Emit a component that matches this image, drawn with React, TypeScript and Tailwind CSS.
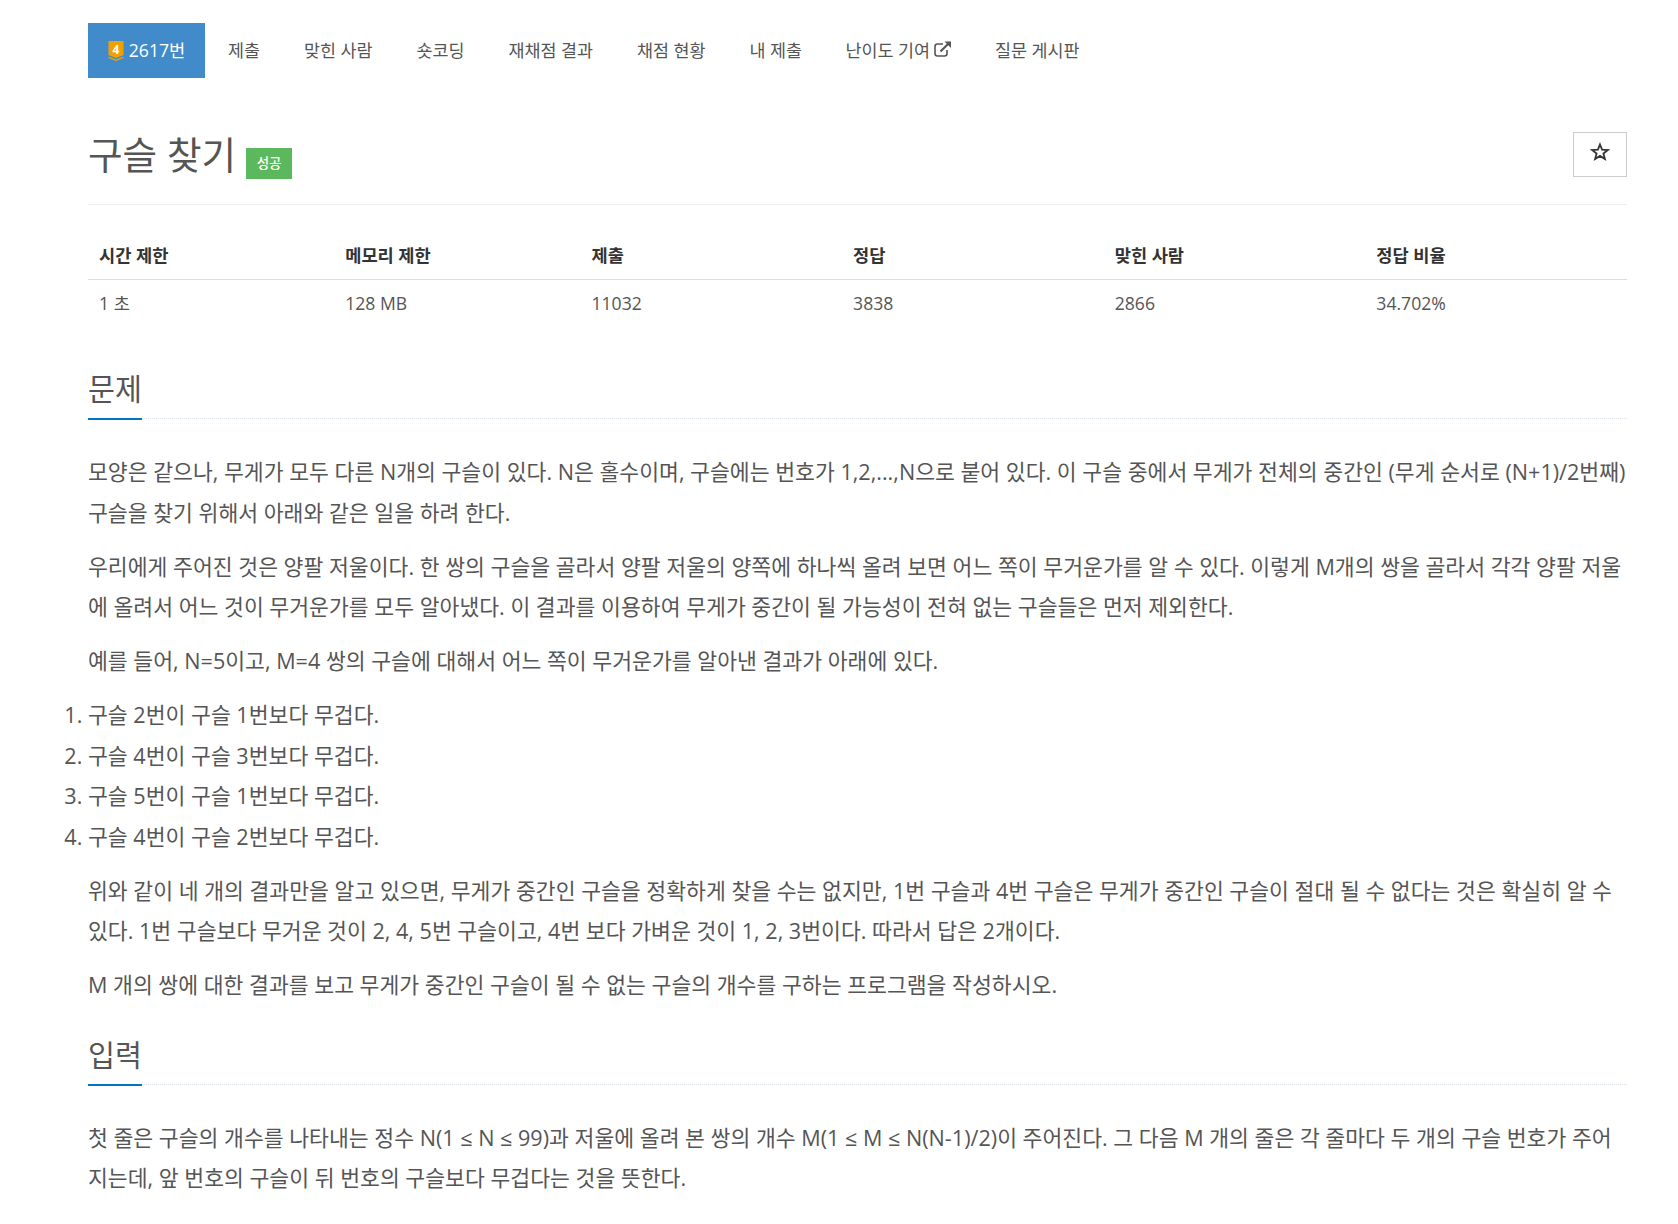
const navItems = ["제출", "맞힌 사람", "숏코딩", "재채점 결과", "채점 현황", "내 제출"];

const stats = [
  { label: "시간 제한", value: "1 초", width: "w-[16%]" },
  { label: "메모리 제한", value: "128 MB", width: "w-[16%]" },
  { label: "제출", value: "11032", width: "w-[17%]" },
  { label: "정답", value: "3838", width: "w-[17%]" },
  { label: "맞힌 사람", value: "2866", width: "w-[17%]" },
  { label: "정답 비율", value: "34.702%", width: "w-[17%]" },
];

const comparisons = [
  "구슬 2번이 구슬 1번보다 무겁다.",
  "구슬 4번이 구슬 3번보다 무겁다.",
  "구슬 5번이 구슬 1번보다 무겁다.",
  "구슬 4번이 구슬 2번보다 무겁다.",
];

const TierBadge = () => (
  <svg width="16" height="20" viewBox="0 0 15 20" className="mr-[5px]">
    <path d="M0 0H15V14L7.5 17L0 14Z" fill="#f0a000" />
    <path d="M0 15.5L7.5 18.5L15 15.5V17L7.5 20L0 17Z" fill="#f0a000" />
    <text x="7.5" y="12.5" textAnchor="middle" fontSize="12" fontWeight="700" fill="#fff">4</text>
  </svg>
);

const ExternalLink = () => (
  <svg width="18" height="16" viewBox="0 0 18 16" fill="none" className="ml-[4px] -translate-y-[1px]">
    <path d="M9 3H3.5C2.1 3 1 4.1 1 5.5V12.5C1 13.9 2.1 15 3.5 15H10.5C11.9 15 13 13.9 13 12.5V9" stroke="#555" strokeWidth="1.6" />
    <path d="M6.5 10.5L14.5 2.5" stroke="#555" strokeWidth="2.2" />
    <path d="M10.5 0.5H17V7Z" fill="#555" />
  </svg>
);

const SectionTitle = ({ children }: { children: string }) => (
  <div className="mb-[33px] h-[59px] border-b border-dotted border-[#dde3e8]">
    <h2 className="inline-block h-[60px] border-b-[2px] border-[#0076c0] text-[29.3px] leading-[58px] text-[#555]">
      {children}
    </h2>
  </div>
);

const App = () => {
  return (
    <div className="min-h-screen overflow-hidden bg-white pl-[88px] pr-[51px] pt-[23px] text-[#555] font-['Open_Sans','Noto_Sans_CJK_KR',sans-serif]">
      {/* tabs */}
      <ul className="flex h-[55px] items-center text-[17.4px]">
        <li className="mr-[1px] flex h-full w-[117px] items-center justify-center bg-[#428bca] text-[17.6px] text-white">
          <TierBadge />
          2617번
        </li>
        {navItems.map((item) => (
          <li key={item} className="px-[22px]">{item}</li>
        ))}
        <li className="flex items-center pl-[21.5px] pr-[21px]">
          난이도 기여
          <ExternalLink />
        </li>
        <li className="px-[22px]">질문 게시판</li>
      </ul>

      {/* title */}
      <div className="mt-[54px] flex h-[73px] items-start justify-between border-b border-[#eee]">
        <div className="flex items-center">
          <h1 className="-translate-y-[1px] text-[37.6px] leading-[46px]">구슬 찾기</h1>
          <span className="ml-[10px] mt-[16px] flex h-[31px] w-[46px] items-center justify-center bg-[#5cb85c] text-[13.5px] font-medium text-white">
            성공
          </span>
        </div>
        <button className="flex h-[45px] w-[54px] items-center justify-center border border-[#ccc] pb-[6px] pr-[1px] text-[#333]">
          <svg width="20" height="20" viewBox="0 0 20 20" fill="none">
            <path d="M10 2.5L12.1 7.7L17.8 8L13.4 11.5L14.9 17L10 13.9L5.1 17L6.6 11.5L2.2 8L7.9 7.7Z" stroke="#333" strokeWidth="1.8" />
          </svg>
        </button>
      </div>

      {/* limits */}
      <table className="mt-[20px] w-full table-fixed text-[17.6px]">
        <thead>
          <tr className="border-b border-[#ddd] text-left text-[#333]">
            {stats.map((s) => (
              <th key={s.label} className={`${s.width} h-[54px] px-[11px] pt-[7px] font-bold`}>{s.label}</th>
            ))}
          </tr>
        </thead>
        <tbody>
          <tr>
            {stats.map((s) => (
              <td key={s.label} className="h-[47px] px-[11px]">{s.value}</td>
            ))}
          </tr>
        </tbody>
      </table>

      {/* problem */}
      <section className="mt-[34px] text-[21.6px] leading-[40.5px]">
        <SectionTitle>문제</SectionTitle>
        <p className="mb-[13.5px]">
          모양은 같으나, 무게가 모두 다른 N개의 구슬이 있다. N은 홀수이며, 구슬에는 번호가 1,2,...,N으로 붙어 있다. 이 구슬 중에서 무게가 전체의 중간인 (무게 순서로 (N+1)/2번째) 구슬을 찾기 위해서 아래와 같은 일을 하려 한다.
        </p>
        <p className="mb-[13.5px]">
          우리에게 주어진 것은 양팔 저울이다. 한 쌍의 구슬을 골라서 양팔 저울의 양쪽에 하나씩 올려 보면 어느 쪽이 무거운가를 알 수 있다. 이렇게 M개의 쌍을 골라서 각각 양팔 저울에 올려서 어느 것이 무거운가를 모두 알아냈다. 이 결과를 이용하여 무게가 중간이 될 가능성이 전혀 없는 구슬들은 먼저 제외한다.
        </p>
        <p className="mb-[13.5px]">
          예를 들어, N=5이고, M=4 쌍의 구슬에 대해서 어느 쪽이 무거운가를 알아낸 결과가 아래에 있다.
        </p>
        <ol className="mb-[13.5px] list-decimal">
          {comparisons.map((c) => (
            <li key={c}>{c}</li>
          ))}
        </ol>
        <p className="mb-[13.5px]">
          위와 같이 네 개의 결과만을 알고 있으면, 무게가 중간인 구슬을 정확하게 찾을 수는 없지만, 1번 구슬과 4번 구슬은 무게가 중간인 구슬이 절대 될 수 없다는 것은 확실히 알 수 있다. 1번 구슬보다 무거운 것이 2, 4, 5번 구슬이고, 4번 보다 가벼운 것이 1, 2, 3번이다. 따라서 답은 2개이다.
        </p>
        <p>
          M 개의 쌍에 대한 결과를 보고 무게가 중간인 구슬이 될 수 없는 구슬의 개수를 구하는 프로그램을 작성하시오.
        </p>
      </section>

      {/* input */}
      <section className="mt-[20px] text-[21.6px] leading-[40.5px]">
        <SectionTitle>입력</SectionTitle>
        <p>
          첫 줄은 구슬의 개수를 나타내는 정수 N(1 ≤ N ≤ 99)과 저울에 올려 본 쌍의 개수 M(1 ≤ M ≤ N(N-1)/2)이 주어진다. 그 다음 M 개의 줄은 각 줄마다 두 개의 구슬 번호가 주어지는데, 앞 번호의 구슬이 뒤 번호의 구슬보다 무겁다는 것을 뜻한다.
        </p>
      </section>
    </div>
  );
};

export default App;
